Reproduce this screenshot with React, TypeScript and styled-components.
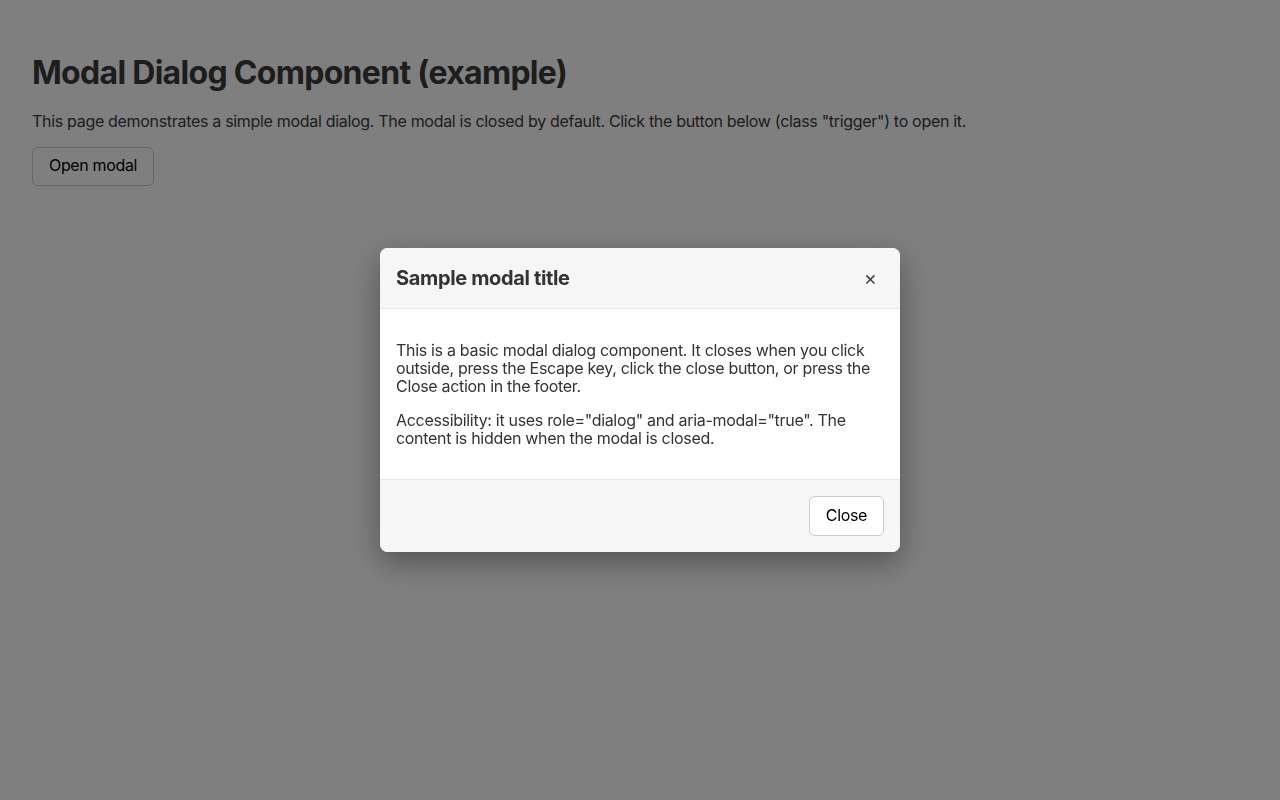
import React from "react";
import styled, { createGlobalStyle } from "styled-components";

const Global = createGlobalStyle`
  html, body { margin: 0; padding: 0; background: #fff; }
  body { font-family: Inter, "Noto Sans", sans-serif; color: #333; letter-spacing: -0.31px; }
  * { box-sizing: border-box; }
`;

const Page = styled.main`
  padding: 32px;
  min-height: 800px;
`;

const Heading = styled.h1`
  font-size: 32px;
  font-weight: 700;
  line-height: 1.2;
  letter-spacing: -0.7px;
  margin: 22px 0 20px;
  color: #3a3a3a;
`;

const Lead = styled.p`
  font-size: 16px;
  line-height: 1.2;
  margin: 0 0 15px;
  color: #3a3a3a;
`;

const Button = styled.button<{ $h?: number }>`
  font-family: inherit;
  font-size: 16px;
  line-height: 1.2;
  letter-spacing: -0.35px;
  color: #000;
  background: #fff;
  border: 1px solid #ccc;
  border-radius: 6px;
  padding: 0 16px;
  height: ${(p) => (p.$h ? `${p.$h}px` : "40px")};
  cursor: pointer;
`;

const Overlay = styled.div`
  position: fixed;
  inset: 0;
  background: rgba(0, 0, 0, 0.5);
  display: flex;
  align-items: flex-start;
  justify-content: center;
  padding-top: 248px;
`;

const Dialog = styled.div`
  width: 520px;
  background: #fff;
  border-radius: 8px;
  overflow: hidden;
  box-shadow: 0 10px 30px rgba(0, 0, 0, 0.35);
`;

const Header = styled.div`
  height: 61px;
  background: #f6f6f6;
  border-bottom: 1px solid #e8e8e8;
  display: flex;
  align-items: center;
  justify-content: space-between;
  padding: 0 16px;
`;

const Title = styled.h2`
  margin: 0;
  font-size: 20px;
  font-weight: 700;
  letter-spacing: -0.35px;
  color: #333;
`;

const CloseX = styled.button`
  background: none;
  border: none;
  font-family: inherit;
  font-size: 20px;
  line-height: 1;
  color: #444;
  padding: 4px 7px;
  cursor: pointer;
`;

const Body = styled.div`
  padding: 16px;
`;

const Para = styled.p`
  margin: 16px 0;
  font-size: 16px;
  line-height: 18px;
  color: #333;
`;

const Footer = styled.div`
  background: #f6f6f6;
  border-top: 1px solid #e8e8e8;
  padding: 16px;
  display: flex;
  justify-content: flex-end;
`;

export default function App() {
  return (
    <>
      <Global />
      <Page>
        <Heading>Modal Dialog Component (example)</Heading>
        <Lead>
          This page demonstrates a simple modal dialog. The modal is closed by default. Click the
          button below (class "trigger") to open it.
        </Lead>
        <Button className="trigger" $h={39}>Open modal</Button>
      </Page>
      <Overlay>
        <Dialog role="dialog" aria-modal="true">
          <Header>
            <Title>Sample modal title</Title>
            <CloseX aria-label="Close">×</CloseX>
          </Header>
          <Body>
            <Para>
              This is a basic modal dialog component. It closes when you click outside, press the
              Escape key, click the close button, or press the Close action in the footer.
            </Para>
            <Para>
              Accessibility: it uses role="dialog" and aria-modal="true". The content is hidden when
              the modal is closed.
            </Para>
          </Body>
          <Footer>
            <Button>Close</Button>
          </Footer>
        </Dialog>
      </Overlay>
    </>
  );
}
